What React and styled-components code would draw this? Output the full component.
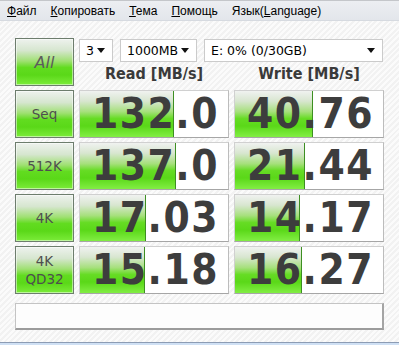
import React from 'react';
import styled, { createGlobalStyle } from 'styled-components';

const GlobalStyle = createGlobalStyle`
    html, body {
        margin : 0;
        padding : 0;
        background : #f7f7f7;
    }
`

const menuItems = [
    { first : 'Ф', rest : 'айл' },
    { first : 'К', rest : 'опировать' },
    { first : 'Т', rest : 'ема' },
    { first : 'П', rest : 'омощь' },
    { before : 'Язык(', first : 'L', rest : 'anguage)' },
];

const rows = [
    { label : ['Seq'], read : '132.0', readFill : 94, write : '40.76', writeFill : 78 },
    { label : ['512K'], read : '137.0', readFill : 96, write : '21.44', writeFill : 70 },
    { label : ['4K'], read : '17.03', readFill : 66, write : '14.17', writeFill : 65 },
    { label : ['4K', 'QD32'], read : '15.18', readFill : 65, write : '16.27', writeFill : 67 },
];

function Arrow(){
    return (
        <svg width="8" height="5" viewBox="0 0 8 5">
            <path d="M0 0 H8 L4 5 Z" fill="#111" />
        </svg>
    )
}

function App(){
    return(
        <Window>
            <GlobalStyle />
            <MenuBar>
                {
                    menuItems.map((item, i)=>{
                        return (
                            <MenuItem key={i}>
                                { item.before }<u>{ item.first }</u>{ item.rest }
                            </MenuItem>
                        )
                    })
                }
            </MenuBar>

            <Main>
                <Grid>
                    <TestButton><AllLabel>All</AllLabel></TestButton>
                    <TopPanel>
                        <SelectRow>
                            <Select width={34}><span>3</span><Arrow /></Select>
                            <Select width={77}><span>1000MB</span><Arrow /></Select>
                            <Select width={179}><span>E: 0% (0/30GB)</span><Arrow /></Select>
                        </SelectRow>
                        <HeaderRow>
                            <Header>Read [MB/s]</Header>
                            <Header>Write [MB/s]</Header>
                        </HeaderRow>
                    </TopPanel>

                    {
                        rows.map((row, i)=>{
                            return (
                                <React.Fragment key={i}>
                                    <TestButton>
                                        <ButtonLabel>
                                            { row.label.map((line, j)=> <span key={j}>{ line }</span>) }
                                        </ButtonLabel>
                                    </TestButton>
                                    <ResultCell>
                                        <Fill style={{ width : row.readFill }} />
                                        <Value>{ row.read }</Value>
                                    </ResultCell>
                                    <ResultCell>
                                        <Fill style={{ width : row.writeFill }} />
                                        <Value>{ row.write }</Value>
                                    </ResultCell>
                                </React.Fragment>
                            )
                        })
                    }
                </Grid>
                <Comment />
            </Main>

            <BottomEdge />
        </Window>
    )
}

export default App

const Window = styled.div`
    width : 399px;
    height : 345px;
    display : flex;
    flex-direction : column;
    overflow : hidden;
    background : repeating-linear-gradient(135deg, #f2f2f2 0px, #f2f2f2 2px, #fbfbfb 2px, #fbfbfb 4px);
    font-family : "DejaVu Sans", sans-serif;
`

const MenuBar = styled.div`
    height : 19px;
    display : flex;
    align-items : center;
    border-top : 1px solid #c4c6ca;
    border-bottom : 1px solid #d6dae0;
    background : linear-gradient(#eceef2, #e3e6eb);
`

const MenuItem = styled.span`
    padding : 0 7px;
    font-family : "Liberation Sans", Arial, sans-serif;
    font-size : 12px;
    color : #000;
    white-space : nowrap;
`

const Main = styled.div`
    flex : 1;
    padding : 17px 15px 0;
`

const Grid = styled.div`
    display : grid;
    grid-template-columns : 59px 150px 150px;
    grid-auto-rows : 48px;
    column-gap : 5px;
    row-gap : 4px;
`

const TestButton = styled.div`
    box-sizing : border-box;
    display : flex;
    align-items : center;
    justify-content : center;
    border : 1px solid #6d7d6d;
    box-shadow : inset 0 0 0 1px rgba(255, 255, 255, 0.5);
    background : linear-gradient(#eef2ee 0%, #d6e6cf 25%, #9fe072 48%, #62dc20 62%, #5ad818 78%, #7cec3a 100%);
`

const AllLabel = styled.span`
    font-size : 16px;
    font-style : italic;
    color : #5c5c5c;
`

const ButtonLabel = styled.span`
    display : flex;
    flex-direction : column;
    align-items : center;
    font-size : 13.5px;
    line-height : 18px;
    color : #4e4e4e;
`

const TopPanel = styled.div`
    grid-column : 2 / span 2;
    display : flex;
    flex-direction : column;
    padding-top : 1px;
`

const SelectRow = styled.div`
    display : flex;
    gap : 7px;
`

const Select = styled.div`
    box-sizing : border-box;
    width : ${props => props.width}px;
    height : 23px;
    display : flex;
    align-items : center;
    justify-content : space-between;
    padding : 0 7px 0 6px;
    background : #fff;
    border : 1px solid #cbcbcb;
    font-size : 12.5px;
    color : #000;
`

const HeaderRow = styled.div`
    display : grid;
    grid-template-columns : 150px 150px;
    column-gap : 5px;
    margin-top : 2px;
`

const Header = styled.div`
    text-align : center;
    font-family : "DejaVu Sans Condensed", "DejaVu Sans", sans-serif;
    font-weight : bold;
    font-size : 16px;
    color : #3a3a3a;
`

const ResultCell = styled.div`
    position : relative;
    box-sizing : border-box;
    display : flex;
    align-items : center;
    justify-content : flex-end;
    padding-right : 9px;
    background : #fff;
    border : 1px solid #d0d0d0;
    border-bottom-color : #a6a6a6;
    border-right-color : #bcbcbc;
    overflow : hidden;
`

const Fill = styled.div`
    position : absolute;
    left : 0;
    top : 0;
    bottom : 0;
    box-sizing : border-box;
    border-right : 1px solid #3d8f22;
    background : linear-gradient(#f0f2f0 0%, #d8e6d0 22%, #a6e07c 45%, #66dc24 60%, #5ad818 76%, #82ee44 100%);
`

const Value = styled.span`
    position : relative;
    font-family : "DejaVu Sans Condensed", "DejaVu Sans", sans-serif;
    font-weight : bold;
    font-size : 42px;
    letter-spacing : 1.5px;
    line-height : 1;
    color : #3d3d3d;
`

const Comment = styled.div`
    box-sizing : border-box;
    height : 27px;
    margin-top : 9px;
    width : 369px;
    background : #fdfdfd;
    border : 1px solid #c4c4c4;
    border-bottom : 2px solid #9c9c9c;
    border-right : 2px solid #a4a4a4;
`

const BottomEdge = styled.div`
    height : 2px;
    border-top : 1px solid #8c9cb4;
    background : #cfe0f4;
`
